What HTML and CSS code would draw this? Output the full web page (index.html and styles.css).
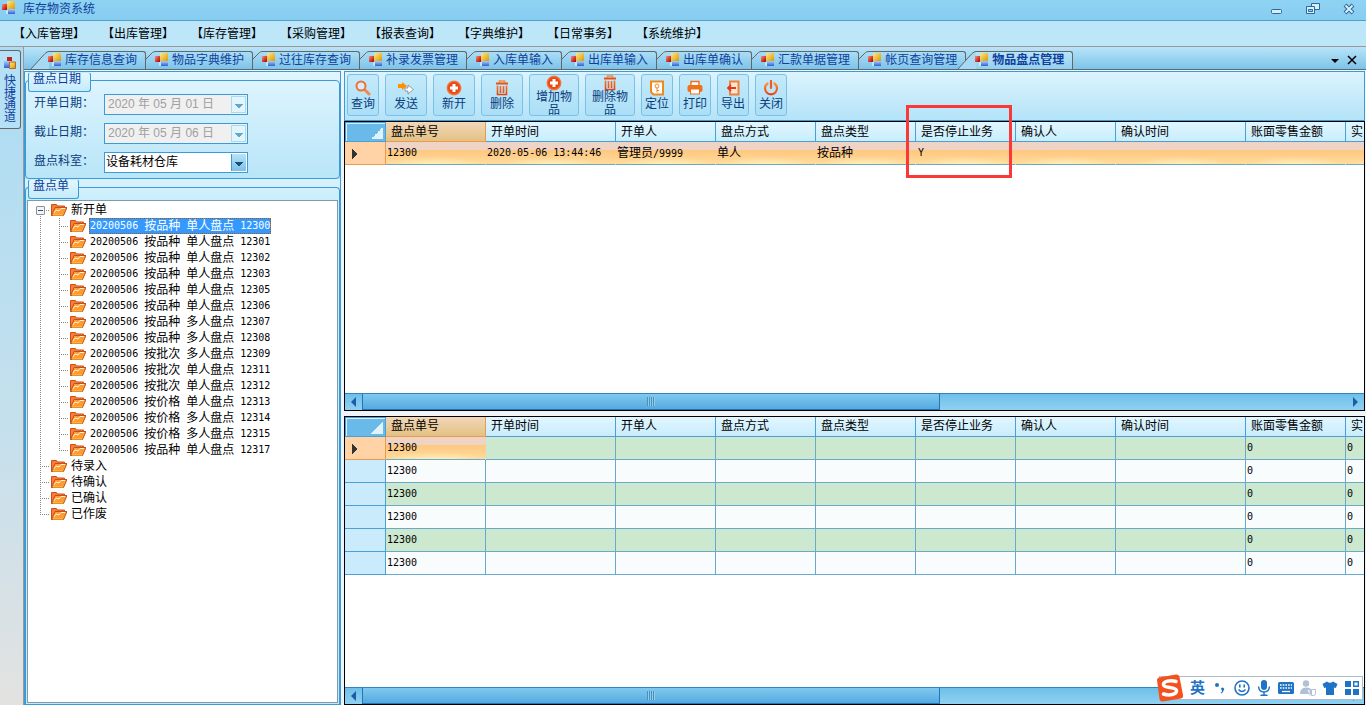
FILE: index.html
```
<!DOCTYPE html>
<html lang="zh-CN">
<head>
  <meta charset="UTF-8" />
  <meta name="viewport" content="width=device-width, initial-scale=1.0" />
  <title>库存物资系统</title>
  <link rel="stylesheet" href="styles.css">
</head>
<body>
  <!-- shared icons -->
  <svg class="defs" width="0" height="0" aria-hidden="true">
    <defs>
      <linearGradient id="gYellow" x1="0" y1="0" x2="1" y2="1"><stop offset="0" stop-color="#ffe98a" /><stop offset="1" stop-color="#d99a00" /></linearGradient>
      <linearGradient id="gBlue" x1="0" y1="0" x2="0" y2="1"><stop offset="0" stop-color="#a9cdff" /><stop offset="1" stop-color="#2f5fd8" /></linearGradient>
      <linearGradient id="gRed" x1="0" y1="0" x2="1" y2="1"><stop offset="0" stop-color="#ff8a70" /><stop offset="1" stop-color="#a80000" /></linearGradient>
      <linearGradient id="gOrange" x1="0" y1="0" x2="0" y2="1"><stop offset="0" stop-color="#ff8d3a" /><stop offset="1" stop-color="#e8430f" /></linearGradient>
      <radialGradient id="gBall"><stop offset="0" stop-color="#e03c10" /><stop offset=".7" stop-color="#ea4a14" /><stop offset="1" stop-color="#f88a50" /></radialGradient>
    </defs>
    <symbol id="i-form" viewBox="0 0 14 14">
      <rect x="5" y="0" width="8" height="8" fill="url(#gYellow)" />
      <rect x="6" y="8" width="7" height="5" fill="url(#gBlue)" />
      <rect x="0" y="3" width="5" height="6" fill="url(#gRed)" />
      <path d="M5 9v4" stroke="#fff" />
    </symbol>
    <symbol id="i-folder" viewBox="0 0 16 14">
      <path d="M.5 12.5V1.5h5l1 1.5h7v2.500" fill="#ff7a33" stroke="#c4521b" />
      <path d="M.5 12.500l3.500-8h12l-3.500 8z" fill="#ff9a35" stroke="#c4521b" />
      <path d="M3 10l2-3 3 1 2-2.500h4" fill="none" stroke="#fff0d0" />
      <path d="M2 12h10" stroke="#ffcf3e" />
    </symbol>
    <symbol id="i-search" viewBox="0 0 16 16">
      <path d="M10 10l4 4" stroke="#ee8a4a" stroke-width="3" stroke-linecap="round" />
      <circle cx="6" cy="6" r="4.500" fill="#d9edf8" stroke="#f0703a" stroke-width="2" />
    </symbol>
    <symbol id="i-send" viewBox="0 0 16 16">
      <path d="M0 4h4V2l5 4-5 4V8H0z" fill="#ff9000" />
      <path d="M7 8h3V5l5.500 4.500L10 14v-3H7z" fill="#fff" stroke="#7b8892" stroke-width=".8" />
    </symbol>
    <symbol id="i-add" viewBox="0 0 16 16">
      <circle cx="8" cy="8" r="7.500" fill="url(#gBall)" />
      <path d="M8 4v8M4 8h8" stroke="#fff" stroke-width="3" />
    </symbol>
    <symbol id="i-trash" viewBox="0 0 16 16">
      <path d="M5.500 2.500V1h5v1.500M3.500 5.500V14.500h9V5.500M6.500 6v7M9.500 6v7" fill="none" stroke="url(#gOrange)" stroke-width="1.600" />
      <path d="M2 3.500h12" stroke="#e8501a" stroke-width="2" />
    </symbol>
    <symbol id="i-locate" viewBox="0 0 16 16">
      <path d="M2 1.500h12v13H4.500L2 12z" fill="#fff" stroke="#f08a1c" stroke-width="2" />
      <circle cx="8" cy="6" r="2" fill="none" stroke="#f08a1c" />
      <path d="M8 8v4.500M8 10.500h2" stroke="#f08a1c" />
    </symbol>
    <symbol id="i-print" viewBox="0 0 16 16">
      <path d="M4 5V1.500h8V5" fill="#fff" stroke="#f0701c" stroke-width="1.400" />
      <rect x=".5" y="5" width="15" height="7" rx="2" fill="#f0701c" />
      <rect x="3.500" y="9" width="9" height="5" fill="#fff" stroke="#f0701c" />
    </symbol>
    <symbol id="i-export" viewBox="0 0 16 16">
      <path d="M5 5V1.500h8.500v13H5V11" fill="#ffe6d0" stroke="#f0803c" stroke-width="2" />
      <path d="M2.500 8H11M6 5L3 8l3 3" fill="none" stroke="#e23a16" stroke-width="1.800" />
    </symbol>
    <symbol id="i-power" viewBox="0 0 16 16">
      <path d="M4.500 3.500a6 6 0 1 0 7 0" fill="none" stroke="url(#gOrange)" stroke-width="2.200" stroke-linecap="round" />
      <path d="M8 1v7" stroke="#ef5a28" stroke-width="2.200" stroke-linecap="round" />
    </symbol>
    <symbol id="i-slope" viewBox="0 0 10 18">
      <path d="M0 8L6.500 1.500Q7.500 .5 10 .5" fill="none" stroke="#666" />
    </symbol>
    <symbol id="i-slope-wide" viewBox="0 0 18 18">
      <path d="M0 18L14 2.500Q16 .5 18 .5V18z" fill="#a6daf4" />
      <path d="M0 18L14 2.500Q16 .5 18 .5" fill="none" stroke="#666" />
    </symbol>
  </svg>

  <header class="titlebar">
    <svg class="form-icon"><use href="#i-form" /></svg>
    <h1>库存物资系统</h1>
    <div class="window-buttons">
      <button type="button" aria-label="最小化"><svg width="14" height="14"><rect x="1.500" y="7.500" width="10" height="4" rx="1" fill="#d8effb" stroke="#2b6a9a" /></svg></button>
      <button type="button" aria-label="还原"><svg width="14" height="14"><path d="M5.500 1.500h8v6h-8z" fill="#d8effb" stroke="#2b6a9a" /><path d="M.5 4.500h8v7h-8z" fill="#d8effb" stroke="#2b6a9a" /><path d="M2.500 7.500h4v2h-4z" fill="#8fd0f2" stroke="#2b6a9a" /></svg></button>
      <button type="button" aria-label="关闭"><svg width="14" height="14"><path d="M3 3l8 8M11 3l-8 8" stroke="#2b6a9a" stroke-width="4" /><path d="M3.500 3.500l7 7M10.500 3.500l-7 7" stroke="#d8effb" stroke-width="2" /></svg></button>
    </div>
  </header>

  <nav class="menubar">
    <a href="#">【入库管理】</a>
    <a href="#">【出库管理】</a>
    <a href="#">【库存管理】</a>
    <a href="#">【采购管理】</a>
    <a href="#">【报表查询】</a>
    <a href="#">【字典维护】</a>
    <a href="#">【日常事务】</a>
    <a href="#">【系统维护】</a>
  </nav>

  <div class="workspace">
    <aside class="rail">
      <button type="button" class="rail-tab">
        <svg width="14" height="14"><path d="M4 1h5v4H4z" fill="#c02020" /><path d="M1 5h5v7H1z" fill="url(#gBlue)" /><path d="M6.500 6h6v6.500h-6z" fill="url(#gYellow)" stroke="#b06a20" /></svg>
        <span>快捷通道</span>
      </button>
    </aside>

    <div class="document">
      <nav class="tabs">
        <a href="#" class="tab wide"><svg class="slope"><use href="#i-slope-wide" /></svg><span><svg class="form-icon"><use href="#i-form" /></svg>库存信息查询</span></a>
        <a href="#" class="tab"><svg class="slope"><use href="#i-slope" /></svg><span><svg class="form-icon"><use href="#i-form" /></svg>物品字典维护</span></a>
        <a href="#" class="tab"><svg class="slope"><use href="#i-slope" /></svg><span><svg class="form-icon"><use href="#i-form" /></svg>过往库存查询</span></a>
        <a href="#" class="tab"><svg class="slope"><use href="#i-slope" /></svg><span><svg class="form-icon"><use href="#i-form" /></svg>补录发票管理</span></a>
        <a href="#" class="tab"><svg class="slope"><use href="#i-slope" /></svg><span><svg class="form-icon"><use href="#i-form" /></svg>入库单输入</span></a>
        <a href="#" class="tab"><svg class="slope"><use href="#i-slope" /></svg><span><svg class="form-icon"><use href="#i-form" /></svg>出库单输入</span></a>
        <a href="#" class="tab"><svg class="slope"><use href="#i-slope" /></svg><span><svg class="form-icon"><use href="#i-form" /></svg>出库单确认</span></a>
        <a href="#" class="tab"><svg class="slope"><use href="#i-slope" /></svg><span><svg class="form-icon"><use href="#i-form" /></svg>汇款单据管理</span></a>
        <a href="#" class="tab"><svg class="slope"><use href="#i-slope" /></svg><span><svg class="form-icon"><use href="#i-form" /></svg>帐页查询管理</span></a>
        <a href="#" class="tab wide active"><svg class="slope"><use href="#i-slope-wide" /></svg><span><svg class="form-icon"><use href="#i-form" /></svg>物品盘点管理</span></a>
        <div class="tab-tools">
          <button type="button" aria-label="标签列表"><svg width="10" height="10"><path d="M1 4h8L5 8z" /></svg></button>
          <button type="button" aria-label="关闭标签"><svg width="10" height="10"><path d="M1 1l8 8M9 1l-8 8" stroke="#000" stroke-width="1.500" /></svg></button>
        </div>
      </nav>

      <main class="content">
        <section class="side">
          <section class="group dates">
            <h2>盘点日期</h2>
            <div class="group-body">
              <div class="field">
                <label for="from">开单日期：</label>
                <div class="combo disabled"><input id="from" type="text" value="2020 年 05 月 01 日" disabled><button type="button" aria-label="选择开单日期" disabled></button></div>
              </div>
              <div class="field">
                <label for="to">截止日期：</label>
                <div class="combo disabled"><input id="to" type="text" value="2020 年 05 月 06 日" disabled><button type="button" aria-label="选择截止日期" disabled></button></div>
              </div>
              <div class="field">
                <label for="dept">盘点科室：</label>
                <div class="combo"><select id="dept"><option>设备耗材仓库</option></select></div>
              </div>
            </div>
          </section>

          <section class="group orders">
            <h2>盘点单</h2>
            <div class="group-body">
              <ul class="tree">
                <li class="open">
                  <div class="node"><button type="button" class="toggle" aria-label="折叠"></button><svg class="folder"><use href="#i-folder" /></svg><span class="label">新开单</span></div>
                  <ul>
                    <li class="node"><svg class="folder"><use href="#i-folder" /></svg><span class="label selected"><b>20200506</b><i>按品种</i><i>单人盘点</i><b>12300</b></span></li>
                    <li class="node"><svg class="folder"><use href="#i-folder" /></svg><span class="label"><b>20200506</b><i>按品种</i><i>单人盘点</i><b>12301</b></span></li>
                    <li class="node"><svg class="folder"><use href="#i-folder" /></svg><span class="label"><b>20200506</b><i>按品种</i><i>单人盘点</i><b>12302</b></span></li>
                    <li class="node"><svg class="folder"><use href="#i-folder" /></svg><span class="label"><b>20200506</b><i>按品种</i><i>单人盘点</i><b>12303</b></span></li>
                    <li class="node"><svg class="folder"><use href="#i-folder" /></svg><span class="label"><b>20200506</b><i>按品种</i><i>单人盘点</i><b>12305</b></span></li>
                    <li class="node"><svg class="folder"><use href="#i-folder" /></svg><span class="label"><b>20200506</b><i>按品种</i><i>单人盘点</i><b>12306</b></span></li>
                    <li class="node"><svg class="folder"><use href="#i-folder" /></svg><span class="label"><b>20200506</b><i>按品种</i><i>多人盘点</i><b>12307</b></span></li>
                    <li class="node"><svg class="folder"><use href="#i-folder" /></svg><span class="label"><b>20200506</b><i>按品种</i><i>多人盘点</i><b>12308</b></span></li>
                    <li class="node"><svg class="folder"><use href="#i-folder" /></svg><span class="label"><b>20200506</b><i>按批次</i><i>多人盘点</i><b>12309</b></span></li>
                    <li class="node"><svg class="folder"><use href="#i-folder" /></svg><span class="label"><b>20200506</b><i>按批次</i><i>单人盘点</i><b>12311</b></span></li>
                    <li class="node"><svg class="folder"><use href="#i-folder" /></svg><span class="label"><b>20200506</b><i>按批次</i><i>单人盘点</i><b>12312</b></span></li>
                    <li class="node"><svg class="folder"><use href="#i-folder" /></svg><span class="label"><b>20200506</b><i>按价格</i><i>单人盘点</i><b>12313</b></span></li>
                    <li class="node"><svg class="folder"><use href="#i-folder" /></svg><span class="label"><b>20200506</b><i>按价格</i><i>多人盘点</i><b>12314</b></span></li>
                    <li class="node"><svg class="folder"><use href="#i-folder" /></svg><span class="label"><b>20200506</b><i>按价格</i><i>多人盘点</i><b>12315</b></span></li>
                    <li class="node"><svg class="folder"><use href="#i-folder" /></svg><span class="label"><b>20200506</b><i>按品种</i><i>单人盘点</i><b>12317</b></span></li>
                  </ul>
                </li>
                <li class="node"><svg class="folder"><use href="#i-folder" /></svg><span class="label">待录入</span></li>
                <li class="node"><svg class="folder"><use href="#i-folder" /></svg><span class="label">待确认</span></li>
                <li class="node"><svg class="folder"><use href="#i-folder" /></svg><span class="label">已确认</span></li>
                <li class="node"><svg class="folder"><use href="#i-folder" /></svg><span class="label">已作废</span></li>
              </ul>
            </div>
          </section>
        </section>

        <section class="detail">
          <div class="toolbar">
            <button type="button" class="small"><svg><use href="#i-search" /></svg>查询</button>
            <button type="button"><svg><use href="#i-send" /></svg>发送</button>
            <button type="button"><svg><use href="#i-add" /></svg>新开</button>
            <button type="button"><svg><use href="#i-trash" /></svg>删除</button>
            <button type="button" class="large"><svg><use href="#i-add" /></svg>增加物品</button>
            <button type="button" class="large"><svg><use href="#i-trash" /></svg>删除物品</button>
            <button type="button" class="small"><svg><use href="#i-locate" /></svg>定位</button>
            <button type="button" class="small"><svg><use href="#i-print" /></svg>打印</button>
            <button type="button" class="small"><svg><use href="#i-export" /></svg>导出</button>
            <button type="button" class="small"><svg><use href="#i-power" /></svg>关闭</button>
          </div>

          <div class="grid">
            <div class="grid-view">
              <table class="master">
                <colgroup><col class="c-head"><col><col class="c-time"><col><col><col><col><col><col class="c-time"><col><col></colgroup>
                <thead>
                  <tr><th class="corner"></th><th class="sorted">盘点单号</th><th>开单时间</th><th>开单人</th><th>盘点方式</th><th>盘点类型</th><th>是否停止业务</th><th>确认人</th><th>确认时间</th><th>账面零售金额</th><th>实</th></tr>
                </thead>
                <tbody>
                  <tr class="current"><th></th><td>12300</td><td>2020-05-06 13:44:46</td><td><span class="cjk">管理员</span>/9999</td><td><span class="cjk">单人</span></td><td><span class="cjk">按品种</span></td><td class="flag">Y</td><td></td><td></td><td></td><td></td></tr>
                </tbody>
              </table>
            </div>
            <div class="scrollbar"><button type="button" class="prev" aria-label="向左滚动"></button><div class="track"><div class="thumb"></div></div><button type="button" class="next" aria-label="向右滚动"></button></div>
          </div>

          <div class="grid">
            <div class="grid-view">
              <table class="items">
                <colgroup><col class="c-head"><col><col class="c-time"><col><col><col><col><col><col class="c-time"><col><col></colgroup>
                <thead>
                  <tr><th class="corner"></th><th class="sorted">盘点单号</th><th>开单时间</th><th>开单人</th><th>盘点方式</th><th>盘点类型</th><th>是否停止业务</th><th>确认人</th><th>确认时间</th><th>账面零售金额</th><th>实</th></tr>
                </thead>
                <tbody>
                  <tr class="current"><th></th><td>12300</td><td></td><td></td><td></td><td></td><td></td><td></td><td></td><td>0</td><td>0</td></tr>
                  <tr><th></th><td>12300</td><td></td><td></td><td></td><td></td><td></td><td></td><td></td><td>0</td><td>0</td></tr>
                  <tr><th></th><td>12300</td><td></td><td></td><td></td><td></td><td></td><td></td><td></td><td>0</td><td>0</td></tr>
                  <tr><th></th><td>12300</td><td></td><td></td><td></td><td></td><td></td><td></td><td></td><td>0</td><td>0</td></tr>
                  <tr><th></th><td>12300</td><td></td><td></td><td></td><td></td><td></td><td></td><td></td><td>0</td><td>0</td></tr>
                  <tr><th></th><td>12300</td><td></td><td></td><td></td><td></td><td></td><td></td><td></td><td>0</td><td>0</td></tr>
                </tbody>
              </table>
            </div>
            <div class="scrollbar"><button type="button" class="prev" aria-label="向左滚动"></button><div class="track"><div class="thumb"></div></div><button type="button" class="next" aria-label="向右滚动"></button></div>
          </div>

          <div class="highlight"></div>
        </section>
      </main>
    </div>
  </div>

  <!-- input method bar, floats over the window -->
  <div class="ime">
    <svg class="ime-logo" viewBox="0 0 28 28">
      <path d="M1 6Q1 4 3 3.500L20 .5Q23 0 23.500 3L27 21Q27.500 24 25 24.500L7 27.500Q4 28 3.500 25z" fill="#f4511e" />
      <path d="M20 7.500C14 5.500 7 7.500 7.500 11C8 14.500 20 12.500 20.500 16.500C21 20.500 13 22 7.500 20" fill="none" stroke="#fff" stroke-width="3.500" stroke-linecap="round" />
    </svg>
    <span class="ime-mode">英</span>
    <svg viewBox="0 0 16 16"><circle cx="5" cy="5" r="2" /><path d="M9 8.500a1.700 1.700 0 1 1 2.500 2.200Q11 13 9 13.500L8.700 12.700Q10 12 10 11z" /></svg>
    <svg viewBox="0 0 16 16"><circle cx="8" cy="8" r="7" fill="none" stroke="#1f73c4" stroke-width="1.600" /><path d="M5 4.500h1.600v3H5zM9.400 4.500H11v3H9.400z" /><path d="M4.500 9.500q3.500 4 7 0" fill="none" stroke="#1f73c4" stroke-width="1.400" /></svg>
    <svg viewBox="0 0 16 16"><rect x="5" y="0" width="6" height="10" rx="3" /><path d="M2.500 6.500Q3 12 8 12T13.500 6.500M8 12v3.500M4.500 15.200h7" fill="none" stroke="#1f73c4" stroke-width="1.500" /></svg>
    <svg viewBox="0 0 16 16"><rect x="0" y="2" width="16" height="12" rx="1.500" /><path d="M2 5h12M2 8h12" stroke="#fff" stroke-width="1.500" stroke-dasharray="1.600 1.100" /><path d="M4 11.500h8" stroke="#fff" stroke-width="1.300" /></svg>
    <svg viewBox="0 0 16 16"><circle cx="6" cy="3.500" r="3.200" fill="#b3bfd6" /><path d="M0 14Q0 7.500 6 7.500T11 11v3z" fill="#b3bfd6" /><path d="M7.500 9.500h2.500v6M11.500 9.500h4v4q0 2-2 2h-2z" fill="#fff" stroke="#b3bfd6" /></svg>
    <svg viewBox="0 0 16 16"><path d="M5 1.500q3 2.500 6 0l4.500 2.500-1.700 4-1.800-.6V15H4V7.400L2.200 8 .5 4z" /></svg>
    <svg viewBox="0 0 16 16"><path d="M1 1h6v6H1zM1 9h6v6H1zM9 9h6v6H9z" /><path d="M9.700 1.700h4.600v4.600H9.700z" fill="none" stroke="#1f73c4" stroke-width="1.400" /></svg>
  </div>
</body>
</html>
```
FILE: styles.css
```
* {
  box-sizing: border-box;
}

body {
  display: flex;
  flex-direction: column;
  height: 100vh;
  margin: 0;
  overflow: hidden;
  background: #bde7f9;
  color: #000;
  font-family: "Liberation Sans", "Noto Sans CJK SC", sans-serif;
  font-size: 12px;
  line-height: 16px;
}

h1,
h2,
ul {
  margin: 0;
  padding: 0;
  font-size: 12px;
  font-weight: normal;
  list-style: none;
}

a {
  color: inherit;
  text-decoration: none;
}

button,
input,
select {
  padding: 0;
  border: none;
  background: none;
  color: inherit;
  font: inherit;
}

svg {
  display: block;
  flex: none;
}

.defs {
  position: absolute;
}

.form-icon {
  width: 14px;
  height: 14px;
}

/* title + menu */
.titlebar {
  display: flex;
  gap: 7px;
  height: 21px;
  padding: 1px 10px 0 2px;
  border-bottom: 1px solid #4c9fd0;
  background: linear-gradient(#8fd3f4, #87cdf0);
  color: #103f9c;
}

.window-buttons {
  display: flex;
  align-items: flex-start;
  gap: 22px;
  margin-left: auto;
  padding-top: 1px;
}

.menubar {
  display: flex;
  gap: 17px;
  height: 26px;
  padding: 5px 13px;
  border-bottom: 1px solid #999;
}

/* left rail */
.workspace {
  display: flex;
  flex: 1;
  min-height: 0;
}

.rail {
  width: 23px;
  padding-top: 3px;
  background: linear-gradient(#abdcf4, #c6e0ec 60%, #e3e2e1);
}

.rail-tab {
  display: flex;
  flex-direction: column;
  align-items: center;
  gap: 5px;
  width: 21px;
  height: 79px;
  padding-top: 5px;
  border: 1px solid #666;
  border-left: none;
  border-radius: 0 3px 3px 0;
  background: #b5e1f6;
  color: #103f9c;
}

.rail-tab span {
  width: 12px;
  line-height: 12px;
}

.document {
  display: flex;
  flex: 1;
  flex-direction: column;
  min-width: 0;
  border-left: 1px solid #999;
}

/* document tabs */
.tabs {
  display: flex;
  height: 23px;
  padding: 4px 7px 0 15px;
  border-bottom: 1px solid #666;
  background: linear-gradient(#b9e4f8, #7cc4ea);
  color: #103f9c;
}

.tab {
  display: flex;
}

.tab .slope {
  width: 10px;
  height: 18px;
}

.tab.wide .slope {
  width: 18px;
  margin-left: -8px;
}

.tab span {
  display: flex;
  gap: 3px;
  padding-right: 8px;
  border-top: 1px solid #666;
  border-right: 1px solid #666;
  border-radius: 0 3px 0 0;
  white-space: nowrap;
}

.tab .form-icon {
  margin: 1px 0 0 -1px;
}

.tab.active {
  font-weight: bold;
}

.tab.active span {
  background: linear-gradient(#b9e4f8, #93d0ef);
}

.tab-tools {
  display: flex;
  gap: 7px;
  margin-left: auto;
  padding-right: 2px;
}

/* the two panes */
.content {
  display: flex;
  flex: 1;
  gap: 3px;
  min-height: 0;
  padding: 1px 1px 0 0;
  background: #f0f4f6;
}

.side {
  display: flex;
  flex-direction: column;
  width: 317px;
  border: 1px solid #3c9bd6;
  background: #c4eafa;
}

/* the top line of a group is drawn 8px below its heading */
.group {
  display: flex;
  flex-direction: column;
  align-items: flex-start;
  padding-left: 3px;
  background: linear-gradient(#e0f6ff, #b8e5f8);
}

.group h2 {
  z-index: 1;
  height: 20px;
  padding: 0 9px 0 4px;
  border: 1px solid #3c9bd6;
  border-top-color: transparent;
  border-radius: 3px;
  background: linear-gradient(#e3f6fe, #c5ebfb);
  color: #0a3c9c;
  line-height: 12px;
}

.group-body {
  align-self: stretch;
  margin-top: -12px;
  margin-left: -3px;
  border: 1px solid #3c9bd6;
  border-bottom: none;
  border-radius: 4px 4px 0 0;
}

.dates .group-body {
  padding: 13px 0 5px 8px;
  border-bottom: 1px solid #3c9bd6;
  border-radius: 4px;
}

.orders {
  flex: 1;
  min-height: 0;
  background: linear-gradient(#d8f2fd, #c9eefc 20px, #c4eafa);
}

.orders .group-body {
  display: flex;
  flex: 1;
  min-height: 0;
  padding: 12px 1px 1px;
}

.field {
  display: flex;
  height: 21px;
  margin-bottom: 8px;
}

.field:last-child {
  margin-bottom: 0;
}

.field label {
  width: 70px;
  padding-top: 1px;
  color: #0a3c7c;
}

.combo {
  display: flex;
  width: 144px;
  height: 21px;
  padding: 1px;
  border: 1px solid #3c9bd6;
  background: #fff;
}

.combo input,
.combo select {
  flex: 1;
  min-width: 0;
  padding: 0 2px 2px;
  appearance: none;
}

.combo select {
  padding-left: 0;
  background:
    linear-gradient(to top right, transparent 50%, #17507c 50%) 129px 8px / 4px 4px no-repeat,
    linear-gradient(to top left, transparent 50%, #17507c 50%) 133px 8px / 4px 4px no-repeat,
    linear-gradient(#3c9bd6, #3c9bd6) 125px 0 / 1px 100% no-repeat,
    linear-gradient(#b9e2f6, #7cc0e8) right / 15px 100% no-repeat;
}

.combo.disabled {
  background: #f0f0f0;
  color: #a0a0a0;
}

.combo button {
  width: 15px;
  border: 1px solid #a5dcf2;
  background:
    linear-gradient(to top right, transparent 50%, #5fa9cc 50%) 3px 7px / 4px 4px no-repeat,
    linear-gradient(to top left, transparent 50%, #5fa9cc 50%) 7px 7px / 4px 4px no-repeat,
    #e4f4fb;
}

/* tree, dotted lines are backgrounds */
.tree {
  flex: 1;
  padding-top: 1px;
  border: 1px solid #7f9aaa;
  background: #fff;
  overflow: hidden;
}

.node {
  display: flex;
  align-items: center;
  gap: 3px;
  height: 16px;
  padding-left: 23px;
}

.folder {
  width: 16px;
  height: 14px;
}

.label {
  display: flex;
  gap: 6px;
  height: 16px;
  padding: 0 1px;
}

.label b {
  font: 10px/16px "DejaVu Sans Mono", monospace;
}

.label i {
  font-style: normal;
}

.label.selected {
  outline: 1px dotted #a05a14;
  outline-offset: -1px;
  background: #3399ff;
  color: #fff;
}

.tree > li {
  background:
    repeating-linear-gradient(#888 0 1px, transparent 1px 2px) 12px 0 / 1px 100% no-repeat,
    repeating-linear-gradient(90deg, #888 0 1px, transparent 1px 2px) 12px 8px / 10px 1px no-repeat;
}

.tree > li.open {
  background-position: 12px 14px, 18px 8px;
  background-size: 1px 100%, 4px 1px;
}

.tree > li:last-child {
  background-size: 1px 8px, 10px 1px;
}

.open > .node {
  padding-left: 8px;
}

.toggle {
  width: 9px;
  height: 9px;
  margin-right: 3px;
  border: 1px solid #8f8f8f;
  border-radius: 1px;
  background: linear-gradient(#2c4f9e, #2c4f9e) center / 5px 1px no-repeat, #f4f4f4;
}

.open li {
  padding-left: 42px;
  background:
    repeating-linear-gradient(#888 0 1px, transparent 1px 2px) 31px 0 / 1px 100% no-repeat,
    repeating-linear-gradient(90deg, #888 0 1px, transparent 1px 2px) 31px 8px / 10px 1px no-repeat;
}

.open li:last-child {
  background-size: 1px 8px, 10px 1px;
}

/* right pane */
.detail {
  position: relative;
  display: flex;
  flex: 1;
  flex-direction: column;
  min-width: 0;
}

.toolbar {
  display: flex;
  gap: 6px;
  height: 50px;
  padding: 2px;
  border: 1px solid #3c9bd6;
  background: linear-gradient(#dcf4fe, #b4e3f8);
}

.toolbar button {
  display: flex;
  flex-direction: column;
  align-items: center;
  justify-content: center;
  width: 42px;
  height: 42px;
  padding-top: 2px;
  border: 1px solid #7cc0e6;
  border-radius: 3px;
  background: linear-gradient(#c4eafa, #abdff7);
  color: #0a3c7c;
  overflow: hidden;
}

.toolbar svg {
  width: 16px;
  height: 16px;
}

.toolbar .small {
  width: 32px;
}

.toolbar .large {
  width: 50px;
  justify-content: flex-start;
  padding: 0 6px;
  line-height: 13px;
}

.grid {
  display: flex;
  flex: 1;
  flex-direction: column;
  min-height: 0;
  border: 1px solid #000;
  background: #fff;
}

.grid + .grid {
  margin-top: 5px;
}

.grid-view {
  flex: 1;
  min-height: 0;
  overflow: hidden;
}

table {
  width: 1101px;
  table-layout: fixed;
  border-spacing: 0;
}

col {
  width: 100px;
}

.c-head {
  width: 41px;
}

.c-time {
  width: 130px;
}

th,
td {
  height: 23px;
  padding: 0 1px;
  border-right: 1px solid #6aa9cb;
  border-bottom: 1px solid #6aa9cb;
  text-align: left;
  white-space: nowrap;
  overflow: hidden;
}

td {
  background: #f8fcfd;
  font: 10px/16px "DejaVu Sans Mono", "Noto Sans CJK SC", monospace;
}

.cjk {
  font-size: 12px;
}

.flag {
  padding-left: 2px;
}

thead th {
  height: 20px;
  padding: 0 5px;
  border-color: #4a9fd6;
  background: linear-gradient(#e2f6ff, #c8edfc);
  font-weight: normal;
}

thead .sorted {
  border-color: #ea9a4c;
  background: linear-gradient(#f1d6b8, #e4c284);
}

thead .corner {
  border: 1px solid #4a9fd6;
  background: linear-gradient(135deg, transparent 50%, #e0f3fd 50%) 25px 4px / 12px 12px no-repeat, #69bae8;
  box-shadow: inset 1px 1px #d4eefb;
}

tbody th {
  border-color: #4a9fd6;
  background: #c9ebfc;
}

.items tr:nth-child(odd) td {
  background: #cce8cf;
}

.current th {
  border-color: #ea9a4c;
  background:
    linear-gradient(to bottom left, transparent 50%, #333 50%) 7px 7px / 6px 5px no-repeat,
    linear-gradient(to top left, #333 50%, transparent 50%) 7px 12px / 0 0 no-repeat,
    linear-gradient(to bottom right, #333 50%, transparent 50%) 7px 12px / 6px 5px no-repeat,
    #ffd3a6;
}

.master .current td,
.items .current td:nth-child(2) {
  border-right-color: transparent;
  background:
    radial-gradient(ellipse 50px 8px at 50% 100%, #fff0bc, rgba(255, 240, 188, 0)),
    linear-gradient(#efd3c4 8px, #ffc77e 8px, #fedd9f);
  background-origin: border-box;
}

.scrollbar {
  display: flex;
  height: 17px;
  border-top: 1px solid #2f83c4;
  background: linear-gradient(#6fbfea, #8fd1f1);
}

.scrollbar button {
  width: 17px;
}

.scrollbar button::before {
  content: "";
  display: block;
  width: 0;
  margin: 0 6px;
  border: 5px solid transparent;
}

.scrollbar .prev::before {
  margin-left: 1px;
  border-right-color: #1c5ea6;
}

.scrollbar .next::before {
  border-left-color: #1c5ea6;
}

.track {
  flex: 1;
}

.thumb {
  width: 58.7%;
  height: 16px;
  border: 1px solid #2374b8;
  border-top: none;
  background:
    repeating-linear-gradient(90deg, #4a90b8 0 1px, #8fcbea 1px 2px) center / 8px 9px no-repeat,
    linear-gradient(#80c9f0, #55aadf);
}

.highlight {
  position: absolute;
  top: 34px;
  left: 562px;
  width: 106px;
  height: 73px;
  border: 3px solid #fa3838;
  pointer-events: none;
}

/* input method bar */
.ime {
  position: absolute;
  right: 3px;
  bottom: 5px;
  display: flex;
  align-items: center;
  gap: 6px;
  height: 24px;
  padding-right: 2px;
  border: 1px solid #aebccb;
  background: #fff;
}

.ime svg {
  width: 16px;
  height: 16px;
  fill: #1f73c4;
}

.ime .ime-logo {
  width: 28px;
  height: 28px;
  margin-left: -4px;
}

.ime-mode {
  width: 16px;
  color: #1f73c4;
  font-size: 15px;
  font-weight: bold;
}
```
